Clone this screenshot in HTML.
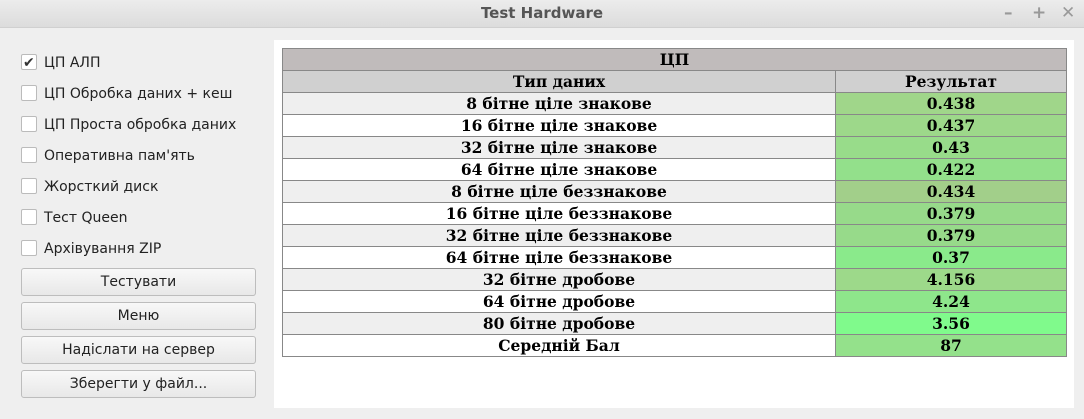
<!DOCTYPE html>
<html><head><meta charset="utf-8"><style>
body{margin:0;width:1084px;height:419px;background:#efefef;font-family:"Liberation Sans","DejaVu Sans",sans-serif;position:relative;overflow:hidden}
.title{position:absolute;left:0;top:0;width:1084px;height:27px;background:linear-gradient(#ececec,#dcdcdc);border-bottom:1px solid #d0d0d0;text-align:center;font:bold 15px "DejaVu Sans",sans-serif;line-height:27px;color:#555}
.wc{position:absolute;top:3px;font:bold 17px "DejaVu Sans",sans-serif;color:#999}
.cb{position:absolute;left:21px;font:14px "DejaVu Sans",sans-serif;height:18px;line-height:18px;color:#222}
.cb i{position:absolute;left:0;top:1px;width:14px;height:14px;border:1px solid #bbb;background:#fff;border-radius:2px}
.cb span{position:absolute;left:23px;top:1px;white-space:nowrap}
.btn{position:absolute;left:21px;width:233px;height:26px;border:1px solid #bdbdbd;border-radius:3px;background:linear-gradient(#f8f8f8,#e8e8e8);text-align:center;font:14px "DejaVu Sans",sans-serif;line-height:26px;color:#222}
.panel{position:absolute;left:274px;top:40px;width:800px;height:368px;background:#fff}
table{position:absolute;left:8px;top:8px;border-collapse:collapse;width:785px;font:bold 15.5px "DejaVu Serif","Liberation Serif",serif;color:#000}
td{border:1px solid #888;height:21px;padding:0;text-align:center;line-height:20px}
tr.a td.l{background:#efefef}
</style></head><body>
<div class="title">Test Hardware</div>
<div class="wc" style="left:1004px">–</div><div class="wc" style="left:1032px">+</div><div class="wc" style="left:1061px">✕</div>
<div class="cb" style="top:53px"><i></i><b style="position:absolute;left:2px;top:1px;font-size:14px;color:#333">✔</b><span>ЦП АЛП</span></div>
<div class="cb" style="top:84px"><i></i><span>ЦП Обробка даних + кеш</span></div>
<div class="cb" style="top:115px"><i></i><span>ЦП Проста обробка даних</span></div>
<div class="cb" style="top:146px"><i></i><span>Оперативна пам'ять</span></div>
<div class="cb" style="top:177px"><i></i><span>Жорсткий диск</span></div>
<div class="cb" style="top:208px"><i></i><span>Тест Queen</span></div>
<div class="cb" style="top:239px"><i></i><span>Архівування ZIP</span></div>
<div class="btn" style="top:268px">Тестувати</div>
<div class="btn" style="top:302px">Меню</div>
<div class="btn" style="top:336px">Надіслати на сервер</div>
<div class="btn" style="top:370px">Зберегти у файл...</div>
<div class="panel"><table>
<tr><td colspan="2" style="background:#c0bbbb">ЦП</td></tr>
<tr><td style="background:#d0d0d0;width:552px">Тип даних</td><td style="background:#d0d0d0">Результат</td></tr>
<tr class="a"><td class="l">8 бітне ціле знакове</td><td style="background:#a0d68a">0.438</td></tr>
<tr><td>16 бітне ціле знакове</td><td style="background:#9dd88a">0.437</td></tr>
<tr class="a"><td class="l">32 бітне ціле знакове</td><td style="background:#98dc8a">0.43</td></tr>
<tr><td>64 бітне ціле знакове</td><td style="background:#93e08b">0.422</td></tr>
<tr class="a"><td class="l">8 бітне ціле беззнакове</td><td style="background:#a2cf8a">0.434</td></tr>
<tr><td>16 бітне ціле беззнакове</td><td style="background:#97da8a">0.379</td></tr>
<tr class="a"><td class="l">32 бітне ціле беззнакове</td><td style="background:#97da8a">0.379</td></tr>
<tr><td>64 бітне ціле беззнакове</td><td style="background:#8aea8b">0.37</td></tr>
<tr class="a"><td class="l">32 бітне дробове</td><td style="background:#9dd98a">4.156</td></tr>
<tr><td>64 бітне дробове</td><td style="background:#8ee68b">4.24</td></tr>
<tr class="a"><td class="l">80 бітне дробове</td><td style="background:#80fa8c">3.56</td></tr>
<tr><td>Середній Бал</td><td style="background:#94e18b">87</td></tr>
</table></div>
</body></html>
